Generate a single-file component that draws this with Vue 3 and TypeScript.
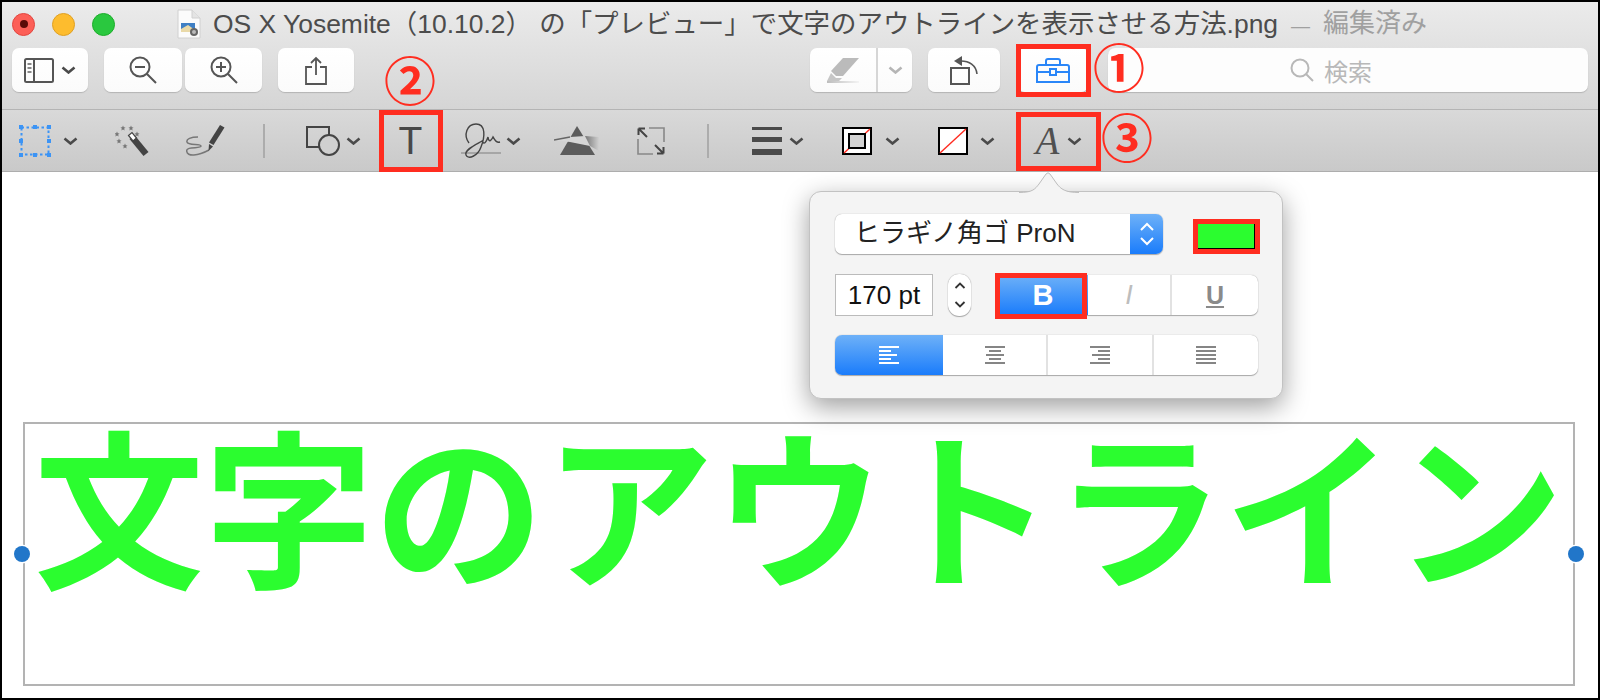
<script setup lang="ts">
const stars: [number, number][] = [[8, 3], [16, 3], [2, 9], [22, 9], [4, 16], [10, 21]];
const starPath = 'M0 -2.6 L0.8 -0.8 L2.6 -0.6 L1.2 0.6 L1.6 2.4 L0 1.4 L-1.6 2.4 L-1.2 0.6 L-2.6 -0.6 L-0.8 -0.8 Z';
const alignIcons = [
  { name: 'left', lines: [[0, 20], [0, 12], [0, 18], [0, 12], [0, 20]] },
  { name: 'center', lines: [[0, 20], [4, 12], [1, 18], [4, 12], [0, 20]] },
  { name: 'right', lines: [[0, 20], [8, 12], [2, 18], [8, 12], [0, 20]] },
  { name: 'justify', lines: [[0, 20], [0, 20], [0, 20], [0, 20], [0, 20]] },
];
</script>

<template>
  <div class="page">
    <header class="head">
      <div class="titlebar">
        <span class="light red"><i></i></span>
        <span class="light yellow"></span>
        <span class="light green"></span>
        <svg class="docicon" width="24" height="30" viewBox="0 0 24 30">
          <path d="M1 1H15L23 9V29H1Z" fill="#fbfbfb" stroke="#d0d0d0" />
          <path d="M15 1V9H23" fill="#e4e4e4" stroke="#d0d0d0" />
          <rect x="4" y="14" width="14" height="9" fill="#3f7fc4" />
          <path d="M4 20L11 16L18 21V23H4Z" fill="#e9d9a8" />
          <circle cx="17" cy="23" r="4" fill="#666" />
          <circle cx="17" cy="23" r="2" fill="#bbb" />
        </svg>
        <span class="title">OS X Yosemite（10.10.2） の「プレビュー」で文字のアウトラインを表示させる方法.png</span>
        <span class="edited"><span class="dash">—</span>編集済み</span>
      </div>
      <div class="toolrow">
        <div class="btn b-side">
          <svg width="30" height="25" viewBox="0 0 30 25" fill="none" stroke="#555" stroke-width="2">
            <rect x="1" y="1" width="28" height="23" rx="1.5" />
            <path d="M10 1V24" />
            <path d="M3.5 6H7.5M3.5 10H7.5M3.5 14H7.5" stroke="#888" />
          </svg>
          <svg class="chev" width="15" height="8" viewBox="0 0 15 8"><path d="M1.5 1.5L7.5 6.5L13.5 1.5" /></svg>
        </div>
        <div class="btn b-zout">
          <svg width="28" height="28" viewBox="0 0 28 28" fill="none" stroke="#555" stroke-width="2">
            <circle cx="11" cy="11" r="9.5" />
            <path d="M18 18L27 27M6 11H16" />
          </svg>
        </div>
        <div class="btn b-zin">
          <svg width="28" height="28" viewBox="0 0 28 28" fill="none" stroke="#555" stroke-width="2">
            <circle cx="11" cy="11" r="9.5" />
            <path d="M18 18L27 27M6 11H16M11 6V16" />
          </svg>
        </div>
        <div class="btn b-share">
          <svg width="22" height="29" viewBox="0 0 22 29" fill="none" stroke="#555" stroke-width="1.8">
            <path d="M7 11H1V28H21V11H15" />
            <path d="M11 19V2M6 7L11 2L16 7" />
          </svg>
        </div>
        <div class="btn b-mark">
          <div class="mark-main">
            <svg width="32" height="25" viewBox="0 0 32 25">
              <defs>
                <linearGradient id="fade" x1="0" x2="1" y1="0" y2="0">
                  <stop offset="0" stop-color="#bdbdbd" />
                  <stop offset="1" stop-color="#f4f4f4" />
                </linearGradient>
              </defs>
              <path d="M16 0H32L16 18H9L4 13Z" fill="#bbb" />
              <path d="M4 15L9 20H15L12 23H0Z" fill="#c6c6c6" />
              <rect x="0" y="23" width="32" height="2" fill="url(#fade)" />
            </svg>
          </div>
          <div class="mark-side">
            <svg class="chev light-chev" width="15" height="8" viewBox="0 0 15 8"><path d="M1.5 1.5L7.5 6.5L13.5 1.5" /></svg>
          </div>
        </div>
        <div class="btn b-rot">
          <svg width="28" height="29" viewBox="0 0 28 29" fill="none" stroke="#555" stroke-width="2">
            <rect x="1" y="12" width="18" height="16" />
            <path d="M11 5C19 5 26 9 27 18" stroke-width="1.6" />
            <path d="M12 0L4 5L12 10Z" fill="#555" stroke="none" />
          </svg>
        </div>
        <div class="btn b-box">
          <svg width="34" height="25" viewBox="0 0 34 25" fill="none" stroke="#2a86f8" stroke-width="2">
            <path d="M3 7H31Q33 7 33 9V24H1V9Q1 7 3 7Z" />
            <path d="M10 7V3Q10 1 12 1H22Q24 1 24 3V7" />
            <path d="M1 14H14M20 14H33" />
            <rect x="14" y="11" width="6" height="6" />
          </svg>
        </div>
        <div class="search">
          <svg width="24" height="24" viewBox="0 0 24 24" fill="none" stroke="#b8b8b8" stroke-width="2">
            <circle cx="10" cy="10" r="8.5" />
            <path d="M16 16L23 23" />
          </svg>
          <span>検索</span>
        </div>
      </div>
    </header>

    <nav class="marks">
      <svg class="i-sel" width="32" height="32" viewBox="0 0 32 32" fill="#3c94f5">
        <rect x="2.5" y="2.5" width="27" height="27" fill="none" stroke="#3c94f5" stroke-width="2" stroke-dasharray="2.5 2.5" />
        <rect x="0" y="0" width="4" height="4" /><rect x="14" y="0" width="4" height="4" /><rect x="28" y="0" width="4" height="4" />
        <rect x="0" y="14" width="4" height="4" /><rect x="28" y="14" width="4" height="4" />
        <rect x="0" y="28" width="4" height="4" /><rect x="14" y="28" width="4" height="4" /><rect x="28" y="28" width="4" height="4" />
      </svg>
      <svg class="chev c-sel" width="15" height="8" viewBox="0 0 15 8"><path d="M1.5 1.5L7.5 6.5L13.5 1.5" /></svg>
      <svg class="i-wand" width="34" height="32" viewBox="0 0 34 32">
        <path v-for="s in stars" :key="s[0] * 100 + s[1]" :d="starPath" :transform="`translate(${s[0]} ${s[1]})`" fill="#777" />
        <path d="M17 12L31 29" stroke="#444" stroke-width="6.5" />
        <path d="M13.5 10.5L17 7.5L21.5 13L18 16Z" fill="#fff" stroke="#444" stroke-width="1.2" />
      </svg>
      <svg class="i-sketch" width="39" height="34" viewBox="0 0 39 34">
        <path d="M12 13C5 13 0 15 1 18C2 22 15 19 15 22C15 25 0 22 0.7 27C1 33 12 32 23 26" fill="none" stroke="#777" stroke-width="1.5" />
        <path d="M34 1L38.5 3.5L27.5 21L23 18.5Z" fill="#444" />
        <path d="M23 20L27 22.5L22.5 27Z" fill="#444" />
      </svg>
      <span class="sep s-a"></span>
      <svg class="i-shapes" width="34" height="30" viewBox="0 0 34 30">
        <rect x="1" y="1" width="22" height="20" fill="none" stroke="#444" stroke-width="2" />
        <circle cx="23" cy="19" r="10" fill="#d0d0d0" stroke="#444" stroke-width="2" />
      </svg>
      <svg class="chev c-shapes" width="15" height="8" viewBox="0 0 15 8"><path d="M1.5 1.5L7.5 6.5L13.5 1.5" /></svg>
      <span class="i-t">T</span>
      <svg class="i-sig" width="40" height="36" viewBox="0 0 40 36">
        <path d="M0 30H40" stroke="#999" stroke-width="1.6" />
        <path d="M8 20C2 12 6 1 15 1C25 1 24 14 20 24C17 33 7 37 5 32C3 27 14 22 21 18C23 22 25 20 27 14C28 20 30 18 32 14C34 17 35 20 39 19" fill="none" stroke="#444" stroke-width="1.4" />
      </svg>
      <svg class="chev c-sig" width="15" height="8" viewBox="0 0 15 8"><path d="M1.5 1.5L7.5 6.5L13.5 1.5" /></svg>
      <svg class="i-prism" width="45" height="30" viewBox="0 0 45 30">
        <defs>
          <linearGradient id="rainbow" x1="0" x2="1" y1="0" y2="0">
            <stop offset="0" stop-color="#777" />
            <stop offset="1" stop-color="#d0d0d0" />
          </linearGradient>
        </defs>
        <path d="M23 0L41 29H6Z" fill="#5c5c5c" />
        <path d="M0 14L16 11L31 10L36 20L16 16Z" fill="#d6d6d6" />
        <path d="M0 14L16 11" stroke="#666" stroke-width="1.5" />
        <path d="M31 10L45 11V25L36 20Z" fill="url(#rainbow)" />
      </svg>
      <svg class="i-crop" width="28" height="28" viewBox="0 0 28 28" fill="none">
        <path d="M12 1H27V15M16 27H1V12" stroke="#888" stroke-width="1.6" />
        <path d="M1.5 1.5L10 10M1.5 1.5H8M1.5 1.5V8M26.5 26.5L18 18M26.5 26.5H20M26.5 26.5V20" stroke="#444" stroke-width="2" />
      </svg>
      <span class="sep s-b"></span>
      <div class="i-lines"><i class="l1"></i><i class="l2"></i><i class="l3"></i></div>
      <svg class="chev c-lines" width="15" height="8" viewBox="0 0 15 8"><path d="M1.5 1.5L7.5 6.5L13.5 1.5" /></svg>
      <svg class="i-border" width="30" height="28" viewBox="0 0 30 28">
        <rect x="1" y="1" width="28" height="26" fill="#fff" stroke="#000" stroke-width="2" />
        <path d="M2 26L28 2" stroke="#ff2a1f" stroke-width="1.4" />
        <rect x="7" y="7" width="16" height="14" fill="#d4d4d4" stroke="#000" stroke-width="2" />
      </svg>
      <svg class="chev c-border" width="15" height="8" viewBox="0 0 15 8"><path d="M1.5 1.5L7.5 6.5L13.5 1.5" /></svg>
      <svg class="i-fill" width="30" height="28" viewBox="0 0 30 28">
        <rect x="1" y="1" width="28" height="26" fill="#fff" stroke="#000" stroke-width="2" />
        <path d="M2 26L28 2" stroke="#ff2a1f" stroke-width="1.4" />
      </svg>
      <svg class="chev c-fill" width="15" height="8" viewBox="0 0 15 8"><path d="M1.5 1.5L7.5 6.5L13.5 1.5" /></svg>
      <span class="i-a">A</span>
      <svg class="chev c-a" width="15" height="8" viewBox="0 0 15 8"><path d="M1.5 1.5L7.5 6.5L13.5 1.5" /></svg>
    </nav>

    <main class="canvas">
      <div class="textbox">
        <span class="handle h-l"></span>
        <span class="handle h-r"></span>
        <span class="bigtext">文字のアウトライン</span>
      </div>

      <section class="popover">
        <svg class="pointer" width="60" height="22" viewBox="0 0 60 22">
          <path d="M0 21.5C14 21.5 16 18 20 13L27 3Q29 0.5 31 3L38 13C42 18 46 21.5 60 21.5" fill="#f4f4f4" stroke="#bdbdbd" />
        </svg>
        <div class="p-row r1">
          <div class="fontsel">
            <span class="fontname">ヒラギノ角ゴ ProN</span>
            <span class="fontstep">
              <svg width="16" height="28" viewBox="0 0 16 28" fill="none" stroke="#fff" stroke-width="2">
                <path d="M2 10L8 4L14 10M2 18L8 24L14 18" />
              </svg>
            </span>
          </div>
          <div class="well"></div>
        </div>
        <div class="p-row r2">
          <div class="sizefield">170 pt</div>
          <div class="sizestep">
            <svg width="12" height="30" viewBox="0 0 12 30" fill="none" stroke="#333" stroke-width="1.8">
              <path d="M1.5 8L6 3.5L10.5 8M1.5 22L6 26.5L10.5 22" />
            </svg>
          </div>
          <div class="seg style">
            <span class="cell on bold">B</span>
            <span class="cell ital">I</span>
            <span class="cell under">U</span>
          </div>
        </div>
        <div class="seg aligns">
          <span v-for="(a, idx) in alignIcons" :key="a.name" class="cell" :class="{ on: idx === 0 }">
            <svg width="20" height="18" viewBox="0 0 20 18">
              <rect
                v-for="(l, n) in a.lines"
                :key="n"
                :x="l[0]"
                :y="n * 4"
                :width="l[1]"
                height="2"
                :fill="idx === 0 ? '#fff' : '#858585'"
              />
            </svg>
          </span>
        </div>
      </section>
    </main>

    <span class="redbox rb-tool"></span>
    <span class="redbox rb-t"></span>
    <span class="redbox rb-a"></span>
    <span class="redbox rb-well"></span>
    <span class="redbox rb-b"></span>
    <span class="num n1">①</span>
    <span class="num n2">②</span>
    <span class="num n3">③</span>
  </div>
</template>

<style scoped>
.page {
  position: relative;
  width: 1600px;
  height: 700px;
  box-sizing: border-box;
  border: 2px solid #000;
  display: flex;
  flex-direction: column;
  background: #fff;
  overflow: hidden;
  font-family: "Liberation Sans", "Noto Sans CJK JP", sans-serif;
}
.head {
  height: 108px;
  box-sizing: border-box;
  border-bottom: 1px solid #b4b4b4;
  background: linear-gradient(#ebebeb, #d5d5d5);
  flex: none;
}
.titlebar {
  height: 44px;
  display: flex;
  align-items: center;
  padding-left: 10px;
  white-space: nowrap;
}
.light {
  width: 23px;
  height: 23px;
  border-radius: 50%;
  box-sizing: border-box;
  margin-right: 17px;
  display: flex;
  align-items: center;
  justify-content: center;
  flex: none;
}
.light.red { background: #fc5f57; border: 1px solid #e2463f; }
.light.red i { width: 8px; height: 8px; border-radius: 50%; background: #5c0b08; }
.light.yellow { background: #fdbc2e; border: 1px solid #dfa023; }
.light.green { background: #2ac83f; border: 1px solid #1dad2b; margin-right: 0; }
.docicon { margin-left: 62px; flex: none; }
.title {
  margin-left: 12px;
  font-size: 26.45px;
  line-height: 34px;
  color: #4c4c4c;
}
.edited {
  font-size: 26px;
  line-height: 34px;
  color: #a0a0a0;
  margin-left: 13px;
}
.dash { margin-right: 13px; font-size: 19px; }
.toolrow {
  height: 44px;
  margin-top: 2px;
  padding-left: 10px;
  display: flex;
}
.btn {
  height: 44px;
  box-sizing: border-box;
  border-radius: 7px;
  background: linear-gradient(#ffffff, #fbfbfb);
  box-shadow: 0 1px 1px #b4b4b4;
  display: flex;
  align-items: center;
  justify-content: center;
  flex: none;
}
.b-side { width: 76px; gap: 7px; }
.b-zout { width: 78px; margin-left: 16px; }
.b-zin { width: 77px; margin-left: 3px; }
.b-share { width: 76px; margin-left: 16px; }
.b-mark { width: 102px; margin-left: 456px; }
.mark-main {
  width: 66px;
  height: 44px;
  display: flex;
  align-items: center;
  justify-content: center;
  border-right: 2px solid #d6d6d6;
}
.mark-side { flex: 1; display: flex; justify-content: center; }
.b-rot { width: 72px; margin-left: 16px; }
.b-box { width: 70px; margin-left: 18px; }
.search {
  width: 480px;
  height: 44px;
  margin-left: 20px;
  border-radius: 7px;
  background: #fdfdfd;
  box-shadow: 0 1px 1px #b4b4b4;
  padding-left: 182px;
  box-sizing: border-box;
  display: flex;
  align-items: center;
  gap: 10px;
  font-size: 24px;
  color: #b8b8b8;
  flex: none;
}
.chev { fill: none; stroke: #4a4a4a; stroke-width: 2.6; flex: none; }
.light-chev { stroke: #b5b5b5; }
.marks {
  height: 62px;
  box-sizing: border-box;
  border-bottom: 1px solid #adadad;
  background: linear-gradient(#d9d9d9, #c9c9c9);
  display: flex;
  align-items: center;
  padding-left: 16.5px;
  flex: none;
}
.marks > * { flex: none; }
.c-sel { margin-left: 12px; }
.i-wand { margin-left: 37px; }
.i-sketch { margin-left: 37px; }
.sep { width: 2px; height: 34px; background: #acacac; }
.s-a { margin-left: 38px; }
.i-shapes { margin-left: 41px; }
.c-shapes { margin-left: 6px; }
.i-t {
  margin-left: 38px;
  width: 24px;
  font-size: 39px;
  line-height: 40px;
  color: #484848;
  text-align: center;
}
.i-sig { margin-left: 38px; }
.c-sig { margin-left: 5px; }
.i-prism { margin-left: 33px; }
.i-crop { margin-left: 38px; }
.s-b { margin-left: 42px; }
.i-lines {
  margin-left: 43px;
  width: 30px;
  height: 28px;
  display: flex;
  flex-direction: column;
  justify-content: space-between;
}
.i-lines i { display: block; background: #4a4a4a; }
.l1 { height: 3px; }
.l2 { height: 5px; }
.l3 { height: 6px; }
.c-lines { margin-left: 7px; }
.i-border { margin-left: 38px; }
.c-border { margin-left: 13px; }
.i-fill { margin-left: 38px; }
.c-fill { margin-left: 12px; }
.i-a {
  margin-left: 41px;
  width: 23px;
  font-family: "Liberation Serif", serif;
  font-style: italic;
  font-size: 39px;
  line-height: 44px;
  color: #505050;
}
.c-a { margin-left: 8px; }
.canvas {
  position: relative;
  flex: 1;
  padding: 250px 0 0 21px;
}
.textbox {
  position: relative;
  width: 1552px;
  height: 264px;
  box-sizing: border-box;
  border: 2px solid #b3b3b3;
  text-align: center;
}
.bigtext {
  display: block;
  font-family: "Noto Sans CJK JP", sans-serif;
  font-weight: 700;
  font-size: 170px;
  line-height: 156px;
  color: #2bfd2f;
  white-space: nowrap;
}
.handle {
  position: absolute;
  top: 122px;
  width: 16px;
  height: 16px;
  border-radius: 50%;
  background: #2176c9;
  box-shadow: 0 0 0 1.5px #fff;
}
.h-l { left: -11px; }
.h-r { right: -11px; }
.popover {
  position: absolute;
  left: 807px;
  top: 19px;
  width: 474px;
  height: 208px;
  box-sizing: border-box;
  padding: 22px 24px 0 25px;
  background: #f4f4f4;
  border: 1px solid #c2c2c2;
  border-radius: 12px;
  box-shadow: 0 8px 26px rgba(0, 0, 0, 0.38);
}
.pointer { position: absolute; left: 209px; top: -21.5px; }
.p-row { display: flex; align-items: center; }
.r1 { height: 40px; align-items: flex-start; }
.r2 { height: 40px; margin-top: 21px; }
.fontsel {
  width: 328px;
  height: 40px;
  box-sizing: border-box;
  display: flex;
  border-radius: 7px;
  background: #fff;
  box-shadow: 0 0 1px #999, 0 1px 1px #aaa;
  overflow: hidden;
}
.fontname {
  flex: 1;
  padding-left: 19px;
  font-size: 26px;
  line-height: 38px;
  color: #222;
}
.fontstep {
  width: 33px;
  background: linear-gradient(#6eb1f8, #1a7cfb);
  display: flex;
  align-items: center;
  justify-content: center;
}
.well {
  margin: 10px 0 0 35px;
  width: 57px;
  height: 25px;
  background: #2bfd2f;
  box-sizing: border-box;
  border-right: 1px solid #000;
  border-bottom: 1px solid #000;
}
.sizefield {
  width: 98px;
  height: 42px;
  box-sizing: border-box;
  border: 1px solid #bbb;
  background: #fff;
  font-size: 26px;
  line-height: 40px;
  text-align: center;
  color: #111;
}
.sizestep {
  margin-left: 15px;
  width: 23px;
  height: 42px;
  box-sizing: border-box;
  border-radius: 11px;
  background: #fff;
  box-shadow: 0 0 1px #888, 0 1px 1px #aaa;
  display: flex;
  align-items: center;
  justify-content: center;
}
.seg {
  display: flex;
  height: 40px;
  border-radius: 7px;
  background: #fff;
  box-shadow: 0 0 1px #999, 0 1px 1px #aaa;
  overflow: hidden;
}
.style { margin-left: 25px; width: 262px; }
.aligns { margin-top: 20px; width: 423px; }
.cell {
  display: flex;
  align-items: center;
  justify-content: center;
  border-right: 2px solid #e2e2e2;
  box-sizing: border-box;
  flex: 1;
  font-size: 27px;
  color: #8a8a8a;
}
.cell:last-child { border-right: 0; }
.cell.on {
  background: linear-gradient(#6eb1f8, #1a7cfb);
  color: #fff;
  border-right: 0;
}
.bold { font-weight: 700; flex: 0 0 92px; padding-left: 2px; font-size: 29px; }
.ital { font-style: italic; color: #bdbdbd; flex: 0 0 84px; }
.under { text-decoration: underline; font-weight: 700; font-size: 25px; }
.aligns .cell:nth-child(1) { flex: 0 0 108px; }
.aligns .cell:nth-child(2) { flex: 0 0 105px; }
.aligns .cell:nth-child(3) { flex: 0 0 106px; }
.redbox {
  position: absolute;
  box-sizing: border-box;
  border: 5px solid #ff2d20;
}
.rb-tool { left: 1014px; top: 42px; width: 75px; height: 53px; }
.rb-t { left: 377px; top: 108px; width: 64px; height: 62px; }
.rb-a { left: 1014px; top: 110px; width: 85px; height: 59px; }
.rb-well { left: 1191px; top: 217px; width: 67px; height: 35px; }
.rb-b { left: 993px; top: 271px; width: 92px; height: 46px; }
.num {
  position: absolute;
  width: 44px;
  height: 44px;
  display: flex;
  align-items: center;
  justify-content: center;
  font-family: "Noto Sans CJK JP", sans-serif;
  font-size: 52px;
  font-weight: 700;
  line-height: 44px;
  color: #ff2d20;
}
.n1 { left: 1095px; top: 42px; }
.n2 { left: 386px; top: 55px; }
.n3 { left: 1103px; top: 112px; }
</style>
